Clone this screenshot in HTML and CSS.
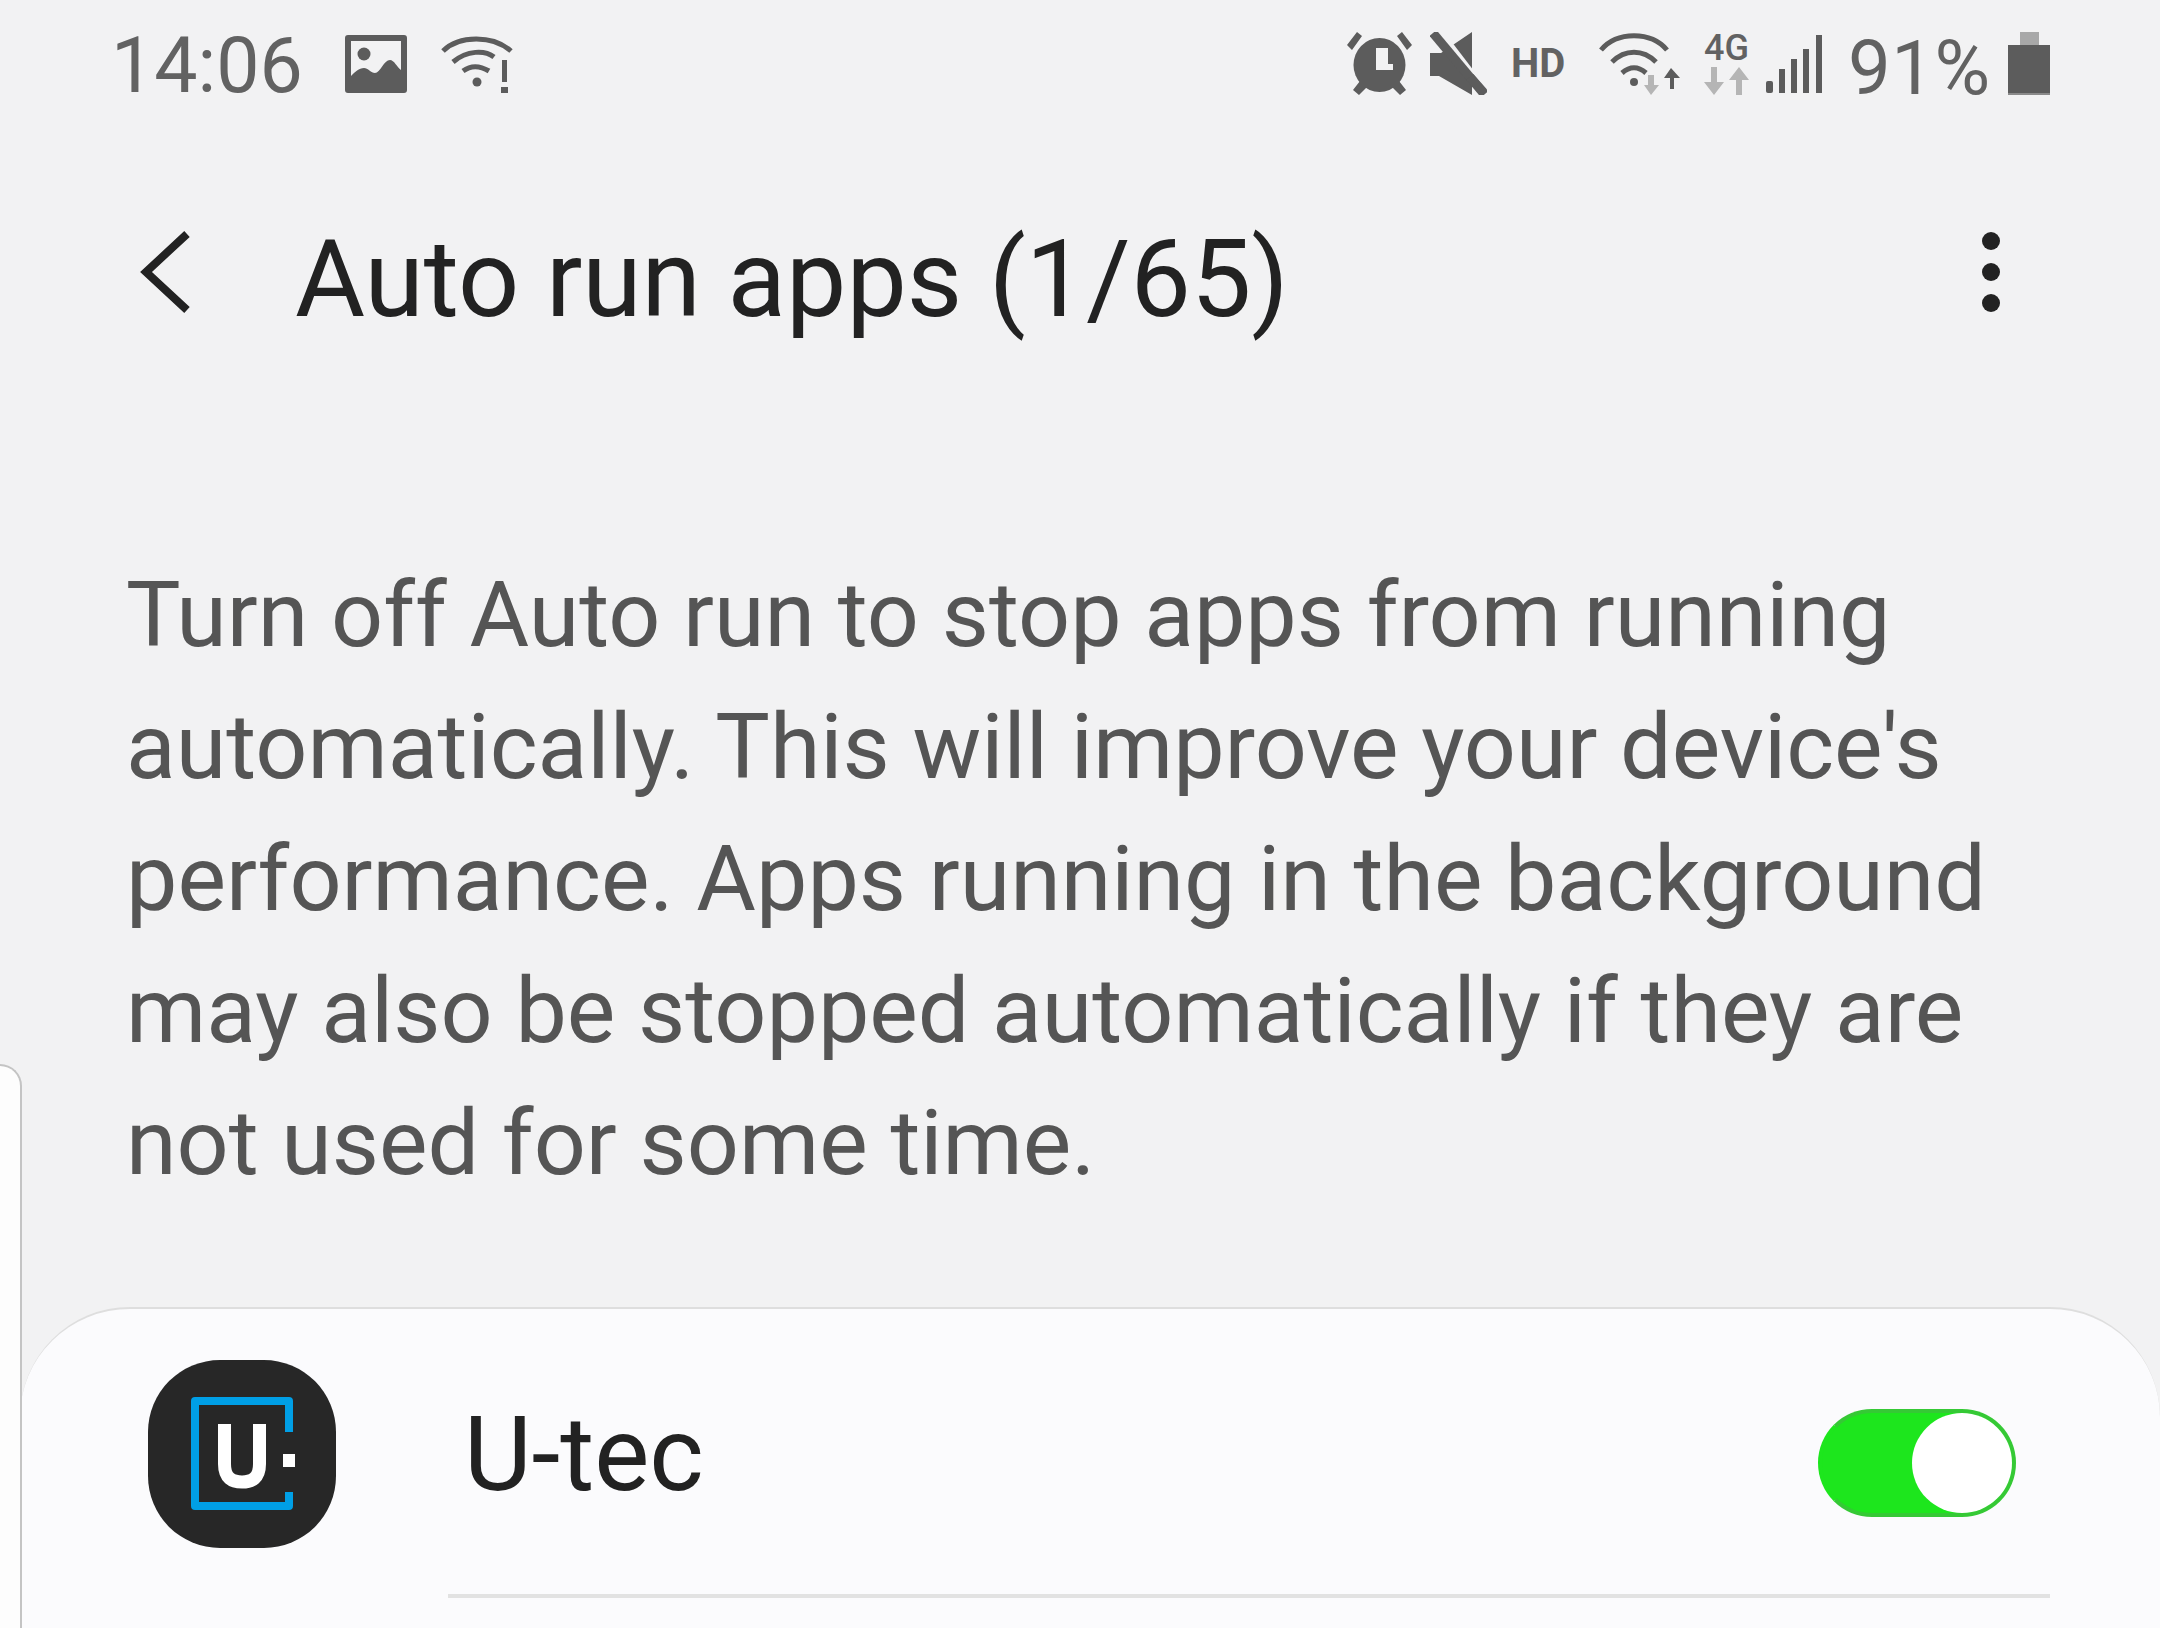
FILE: index.html

```html
<!DOCTYPE html>
<html lang="en">
<head>
    <meta charset="UTF-8">
    <title>Auto run apps</title>
    <link rel="stylesheet" href="styles.css">
</head>
<body>

    <div class="edge-sheet"></div>

    <div class="status-bar">
        <div class="status-left">
            <span class="clock">14:06</span>
            <svg class="icon-picture" viewBox="0 0 62 58">
                <path fill-rule="evenodd" d="M3 0H59a3 3 0 0 1 3 3V55a3 3 0 0 1-3 3H3a3 3 0 0 1-3-3V3a3 3 0 0 1 3-3ZM6 6V41C10 37 14 33 19 33 23 33 26 38 30 38 35 38 39 25 45 25 49 25 52 32 56 35V6Z"/>
                <circle cx="19" cy="19" r="6.5"/>
            </svg>
            <svg class="icon-wifi-alert" viewBox="0 0 72 60">
                <g fill="none" stroke="#5c5c5c" stroke-width="5">
                    <path d="M2 17C18 1 52 1 70 17"/>
                    <path d="M12 28C26 16 44 16 53 23"/>
                    <path d="M22 37C30 31 38 31 48 37"/>
                </g>
                <circle cx="36" cy="48" r="4.5"/>
                <rect x="61" y="26" width="5" height="22"/>
                <rect x="60" y="53" width="7" height="6"/>
            </svg>
        </div>
        <div class="status-right">
            <svg class="icon-alarm" viewBox="0 0 65 63">
                <path d="M0 13 10 0 15 4 5 18ZM65 13 55 0 50 4 60 18Z"/>
                <ellipse cx="32.5" cy="33" rx="26" ry="27"/>
                <path d="M6 58 13 49 20 55 12 63ZM59 58 52 49 45 55 53 63Z"/>
                <path fill="#f2f2f3" d="M29 16H41V32H46V38H29Z"/>
            </svg>
            <svg class="icon-mute" viewBox="0 0 57 63">
                <path d="M0 21H11L42 0V63L9 44H0Z"/>
                <path d="M11 0 57 60" stroke="#f2f2f3" stroke-width="5" fill="none"/>
                <path d="M3 1 54 62" stroke="#5c5c5c" stroke-width="9" fill="none"/>
                <path d="M40 45 55 62" stroke="#5c5c5c" stroke-width="9" fill="none"/>
            </svg>
            <span class="hd">HD</span>
            <svg class="icon-wifi-data" viewBox="0 0 81 62">
                <g fill="none" stroke="#5c5c5c" stroke-width="5">
                    <path d="M2 17C18 -2 52 -2 68 17"/>
                    <path d="M13 29C26 16 44 16 57 29"/>
                    <path d="M23 40C31 33 39 33 47 40"/>
                </g>
                <circle cx="35" cy="49" r="4"/>
                <path fill="#b5b5b5" d="M49 42H55V52H60L52 62 45 52H49Z"/>
                <path d="M71 56V45H65L72 35 81 45H75V56Z"/>
            </svg>
            <div class="net-type">
                <span class="net-label">4G</span>
                <svg class="icon-net-arrows" viewBox="0 0 47 28">
                    <path d="M8 0H14V15H21L11 28 1 15H8ZM33 28V13H26L36 0 46 13H39V28Z"/>
                </svg>
            </div>
            <svg class="icon-signal" viewBox="0 0 56 58">
                <rect x="0" y="46" width="7" height="12" rx="2"/>
                <rect x="13" y="34" width="6" height="24"/>
                <rect x="25" y="24" width="6" height="34"/>
                <rect x="37" y="14" width="6" height="44"/>
                <rect x="50" y="0" width="6" height="58"/>
            </svg>
            <span class="battery-text">91%</span>
            <div class="battery">
                <div class="battery-cap"></div>
                <div class="battery-body"></div>
            </div>
        </div>
    </div>

    <div class="toolbar">
        <svg class="icon-back" viewBox="0 0 52 84">
            <path d="M47 4 6 42 47 80" fill="none" stroke="#222" stroke-width="8"/>
        </svg>
        <h1 class="title">Auto run apps (1/65)</h1>
        <div class="more">
            <span class="dot"></span>
            <span class="dot"></span>
            <span class="dot"></span>
        </div>
    </div>

    <p class="intro">Turn off Auto run to stop apps from running<br>automatically. This will improve your device's<br>performance. Apps running in the background<br>may also be stopped automatically if they are<br>not used for some time.</p>

    <div class="card">
        <div class="app-row">
            <svg class="app-icon" viewBox="0 0 188 188">
                <rect width="188" height="188" rx="72" fill="#272727"/>
                <path d="M141 72V41H47V146H141V132" fill="none" stroke="#009fe6" stroke-width="8" stroke-linejoin="round"/>
                <path d="M76.500 64V104C76.500 118 84 122 94 122 104 122 111.500 118 111.500 104V64" fill="none" stroke="#fff" stroke-width="13"/>
                <rect x="135" y="94" width="12" height="13" fill="#fff"/>
            </svg>
            <div class="app-main">
                <div class="app-line">
                    <span class="app-name">U-tec</span>
                    <div class="toggle"><div class="knob"></div></div>
                </div>
            </div>
        </div>
    </div>

</body>
</html>
```

FILE: styles.css

```css
/* General Styles */
html, body {
    margin: 0;
}

body {
    width: 2160px;
    height: 1628px;
    overflow: hidden;
    position: relative;
    background: #f2f2f3;
    font-family: 'Roboto', sans-serif;
}

svg {
    display: block;
    fill: #5c5c5c;
    flex: none;
}

/* Neighbouring sheet peeking in at the left */
.edge-sheet {
    position: absolute;
    left: 0;
    top: 1064px;
    bottom: 0;
    width: 20px;
    z-index: 1;
    background: #fdfdfd;
    border-top: 2px solid #c4c4c4;
    border-right: 2px solid #c4c4c4;
    border-top-right-radius: 22px;
}

/* Status bar */
.status-bar {
    height: 127px;
    padding: 0 110px 0 111px;
    display: flex;
    justify-content: space-between;
    align-items: center;
    color: #626262;
}

.status-left, .status-right {
    display: flex;
    align-items: center;
}

.clock {
    font-size: 77px;
    font-weight: 400;
    width: 234px;
    margin-top: 4px;
}

.icon-picture {
    width: 62px;
    height: 58px;
    margin-right: 34px;
}

.icon-wifi-alert {
    width: 72px;
    height: 60px;
}

.icon-alarm {
    width: 65px;
    height: 63px;
}

.icon-mute {
    width: 57px;
    height: 63px;
    margin-left: 18px;
}

.hd {
    font-size: 40px;
    font-weight: 700;
    margin-left: 24px;
    width: 51px;
    white-space: nowrap;
}

.icon-wifi-data {
    width: 81px;
    height: 62px;
    margin-left: 37px;
}

.net-type {
    width: 47px;
    margin-left: 23px;
    text-align: center;
}

.net-label {
    display: block;
    font-size: 36px;
    font-weight: 500;
    line-height: 33px;
}

.icon-net-arrows {
    width: 47px;
    height: 28px;
    margin-top: 2px;
    fill: #b5b5b5;
}

.icon-signal {
    width: 56px;
    height: 58px;
    margin-left: 16px;
    margin-top: 1px;
}

.battery-text {
    font-size: 76px;
    font-weight: 400;
    margin: 8px 0 0 26px;
    width: 139px;
    letter-spacing: 0.500px;
    white-space: nowrap;
}

.battery {
    width: 42px;
    margin-left: 21px;
}

.battery-cap {
    width: 19px;
    height: 13px;
    margin: 0 auto;
    background: #a8a8a8;
}

.battery-body {
    height: 48px;
    background: #5c5c5c;
    border-bottom: 2px solid #8a8a8a;
}

/* Toolbar */
.toolbar {
    height: 303px;
    padding: 0 160px 0 140px;
    display: flex;
    align-items: center;
}

.icon-back {
    width: 52px;
    height: 84px;
    margin-top: -13px;
}

.title {
    margin: 0 0 0 103px;
    flex: 1;
    font-size: 107.500px;
    font-weight: 400;
    color: #222;
    white-space: nowrap;
}

.more {
    display: flex;
    flex-direction: column;
    gap: 13px;
    margin-top: -13px;
}

.dot {
    width: 18px;
    height: 18px;
    border-radius: 50%;
    background: #222;
}

/* Intro text */
.intro {
    margin: 119px 0 98px 126px;
    font-size: 91.500px;
    line-height: 132px;
    color: #555;
    white-space: nowrap;
}

/* App list */
.card {
    margin-left: 20px;
    height: 321px;
    box-sizing: border-box;
    background: #fbfbfd;
    border-top: 2px solid #dedede;
    border-radius: 110px 110px 0 0;
    padding: 51px 110px 0 128px;
}

.app-row {
    display: flex;
}

.app-icon {
    width: 188px;
    height: 188px;
}

.app-main {
    flex: 1;
    margin-left: 112px;
    height: 234px;
    border-bottom: 4px solid #e2e2e2;
}

.app-line {
    display: flex;
    justify-content: space-between;
    align-items: center;
    height: 188px;
    margin-left: 16px;
    padding-right: 34px;
}

.app-name {
    font-size: 104px;
    color: #222;
}

.toggle {
    width: 198px;
    height: 108px;
    box-sizing: border-box;
    border-radius: 54px;
    background: #1de61d;
    border: 4px solid #35c935;
    border-left-color: #1de61d;
    display: flex;
    justify-content: flex-end;
    margin-top: 17px;
}

.knob {
    width: 100px;
    height: 100px;
    border-radius: 50%;
    background: #fff;
}
```
